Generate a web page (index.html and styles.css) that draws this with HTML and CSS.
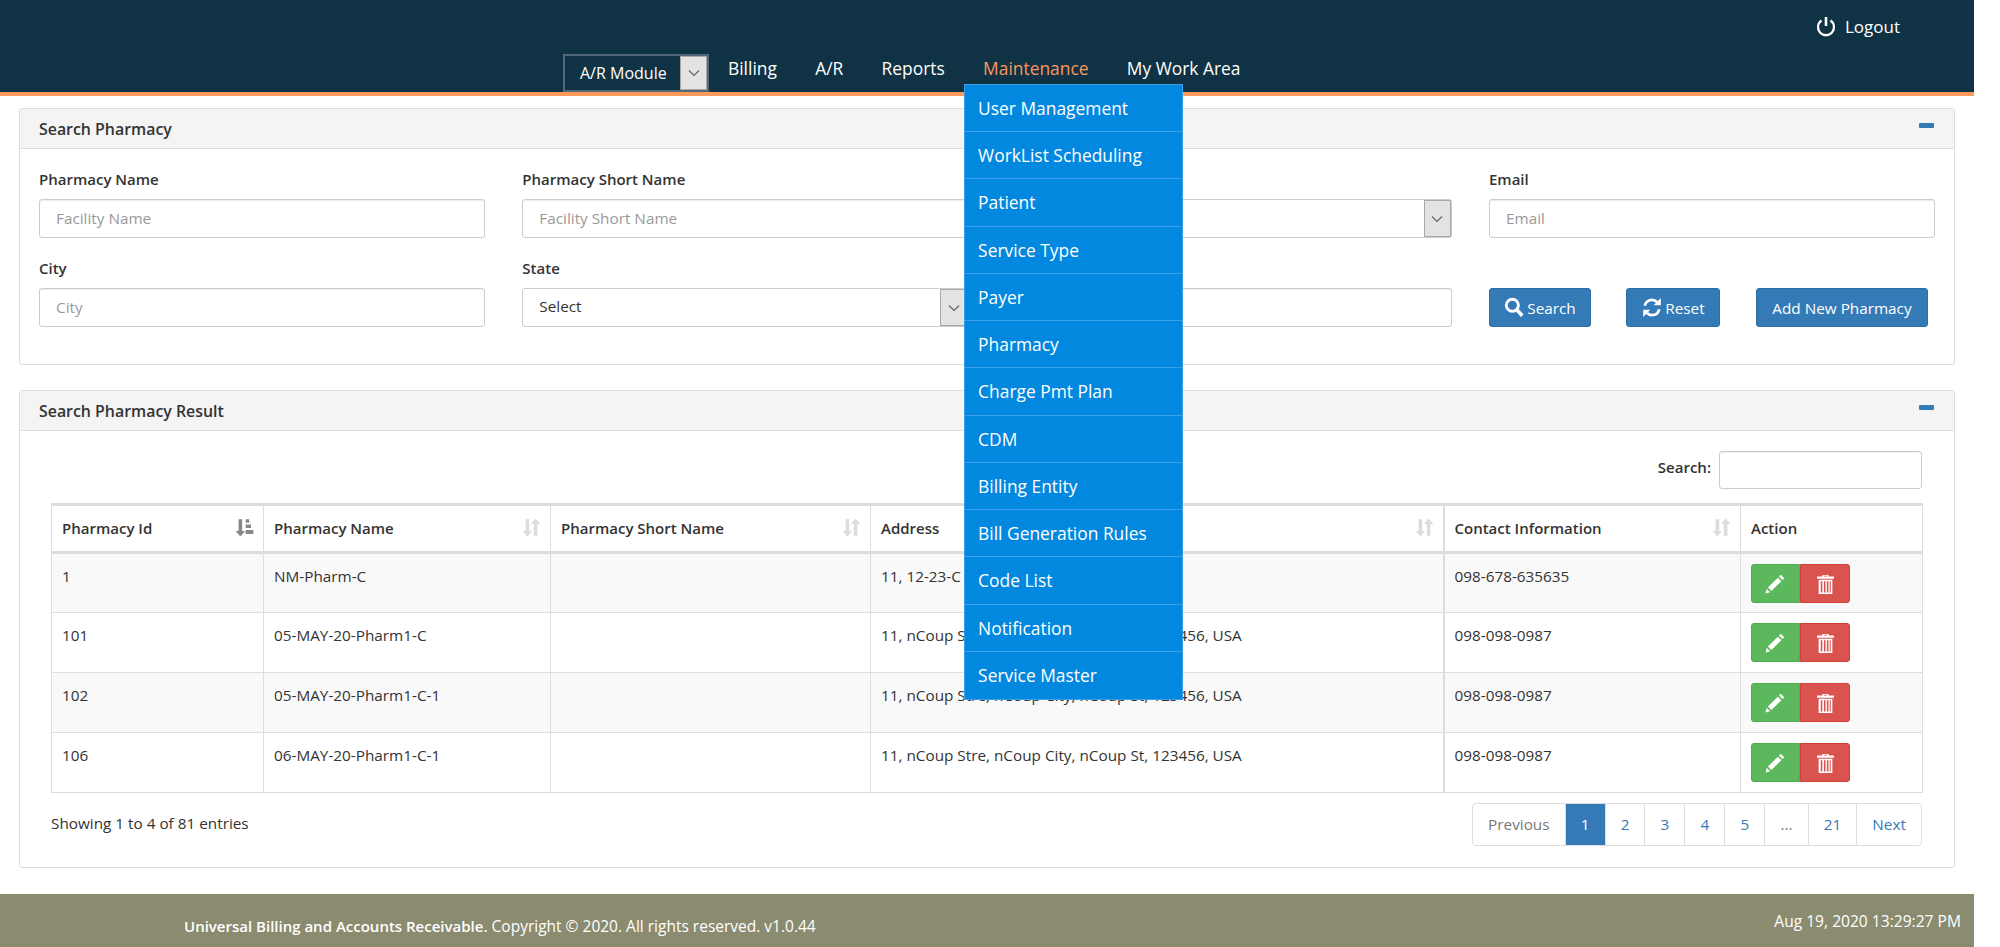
FILE: index.html
```html
<!DOCTYPE html>
<html lang="en">
<head>
    <meta charset="UTF-8">
    <title>Search Pharmacy</title>
    <link rel="stylesheet" href="styles.css">
</head>
<body>
    <svg class="defs" width="0" height="0">
        <symbol id="i-chevron" viewBox="0 0 12 8"><path d="M1 1.5l5 5 5-5" fill="none" stroke="currentColor" stroke-width="1.2"/></symbol>
        <symbol id="i-sort" viewBox="0 0 16 16"><path d="M3 1h3v10h2.500L4.500 15.500.5 11H3zM10 5H7.500l4-4.500 4 4.500H13v10h-3z" fill="currentColor"/></symbol>
        <symbol id="i-sort-active" viewBox="0 0 16 16"><path d="M3 1h3v10h2.500L4.500 15.500.5 11H3zM9 1h3v3H9zM9 5.500h4.500v3H9zM9 10h6.500v3.500H9z" fill="currentColor"/></symbol>
        <symbol id="i-pencil" viewBox="0 0 18 18"><path d="M13.500 1.500l3 3-1.500 1.500-3-3zM11 4l3 3-8.500 8.500-3-3zM1.500 13.500l3 3-4 1z" fill="currentColor"/></symbol>
        <symbol id="i-trash" viewBox="0 0 18 20"><path fill="currentColor" fill-rule="evenodd" d="M6 1.500h6V3h5v2H1V3h5zM7.500 2.200V3h3v-.8zM2.500 6h13v13.500h-13zM4.500 7.500v10.500h1.500V7.500zM7.500 7.500v10.500H9V7.500zM10.300 7.500v10.500h1.500V7.500zM13 7.500v10.500h1V7.500z"/></symbol>
    </svg>

    <div id="page">
        <header class="topbar">
            <div class="topbar-user">
                <a class="logout" href="#">
                    <svg width="20" height="21" viewBox="0 0 20 21"><path d="M5.500 4.500a8 8 0 1 0 9 0" fill="none" stroke="#fff" stroke-width="2.200"/><path d="M10 1v9" stroke="#fff" stroke-width="2.600"/></svg>
                    Logout
                </a>
            </div>
            <nav class="topbar-nav">
                <div class="module-select">
                    <span class="module-name">A/R Module</span>
                    <span class="module-arrow"><svg width="12" height="8"><use href="#i-chevron"/></svg></span>
                </div>
                <ul class="menu">
                    <li><a href="#">Billing</a></li>
                    <li><a href="#">A/R</a></li>
                    <li><a href="#">Reports</a></li>
                    <li class="active">
                        <a href="#">Maintenance</a>
                        <ul class="submenu">
                            <li><a href="#">User Management</a></li>
                            <li><a href="#">WorkList Scheduling</a></li>
                            <li><a href="#">Patient</a></li>
                            <li><a href="#">Service Type</a></li>
                            <li><a href="#">Payer</a></li>
                            <li><a href="#">Pharmacy</a></li>
                            <li><a href="#">Charge Pmt Plan</a></li>
                            <li><a href="#">CDM</a></li>
                            <li><a href="#">Billing Entity</a></li>
                            <li><a href="#">Bill Generation Rules</a></li>
                            <li><a href="#">Code List</a></li>
                            <li><a href="#">Notification</a></li>
                            <li><a href="#">Service Master</a></li>
                        </ul>
                    </li>
                    <li><a href="#">My Work Area</a></li>
                </ul>
            </nav>
        </header>

        <main class="content">
            <section class="panel">
                <div class="panel-heading">
                    <span>Search Pharmacy</span>
                    <span class="collapse-bar"></span>
                </div>
                <div class="panel-body search-form">
                    <div class="field">
                        <label>Pharmacy Name</label>
                        <input type="text" placeholder="Facility Name">
                    </div>
                    <div class="field">
                        <label>Pharmacy Short Name</label>
                        <input type="text" placeholder="Facility Short Name">
                    </div>
                    <div class="field">
                        <label>&nbsp;</label>
                        <div class="select">
                            <span></span>
                            <span class="select-arrow"><svg width="12" height="8"><use href="#i-chevron"/></svg></span>
                        </div>
                    </div>
                    <div class="field">
                        <label>Email</label>
                        <input type="text" placeholder="Email">
                    </div>
                    <div class="field">
                        <label>City</label>
                        <input type="text" placeholder="City">
                    </div>
                    <div class="field">
                        <label>State</label>
                        <div class="select">
                            <span>Select</span>
                            <span class="select-arrow"><svg width="12" height="8"><use href="#i-chevron"/></svg></span>
                        </div>
                    </div>
                    <div class="field">
                        <label>&nbsp;</label>
                        <input type="text">
                    </div>
                    <div class="field">
                        <label>&nbsp;</label>
                        <div class="form-buttons">
                            <button class="btn btn-search">
                                <svg width="20" height="21" viewBox="0 0 18 19"><circle cx="7.500" cy="7.500" r="5.500" fill="none" stroke="#fff" stroke-width="2.600"/><path d="M11.500 11.500l5 5.500" stroke="#fff" stroke-width="3.200"/></svg>
                                Search
                            </button>
                            <button class="btn btn-reset">
                                <svg width="20" height="21" viewBox="0 0 18 19"><path d="M2.500 8a6.500 6.500 0 0 1 11-3.500" fill="none" stroke="#fff" stroke-width="2.400"/><path d="M17 1v6.500h-6.500z" fill="#fff"/><path d="M15.500 11a6.500 6.500 0 0 1-11 3.500" fill="none" stroke="#fff" stroke-width="2.400"/><path d="M1 18v-6.500h6.500z" fill="#fff"/></svg>
                                Reset
                            </button>
                            <button class="btn btn-add">Add New Pharmacy</button>
                        </div>
                    </div>
                </div>
            </section>

            <section class="panel">
                <div class="panel-heading">
                    <span>Search Pharmacy Result</span>
                    <span class="collapse-bar"></span>
                </div>
                <div class="panel-body result-body">
                    <div class="table-search">
                        <label>Search:</label>
                        <input type="text">
                    </div>
                    <table class="result-table">
                        <colgroup>
                            <col class="col-id">
                            <col class="col-name">
                            <col class="col-short">
                            <col class="col-address">
                            <col class="col-contact">
                            <col class="col-action">
                        </colgroup>
                        <thead>
                            <tr>
                                <th><div class="th-inner">Pharmacy Id <svg class="sort sort-on"><use href="#i-sort-active"/></svg></div></th>
                                <th><div class="th-inner">Pharmacy Name <svg class="sort"><use href="#i-sort"/></svg></div></th>
                                <th><div class="th-inner">Pharmacy Short Name <svg class="sort"><use href="#i-sort"/></svg></div></th>
                                <th><div class="th-inner">Address <svg class="sort"><use href="#i-sort"/></svg></div></th>
                                <th class="contact"><div class="th-inner">Contact Information <svg class="sort"><use href="#i-sort"/></svg></div></th>
                                <th>Action</th>
                            </tr>
                        </thead>
                        <tbody>
                            <tr>
                                <td>1</td>
                                <td>NM-Pharm-C</td>
                                <td></td>
                                <td>11, 12-23-C</td>
                                <td class="contact">098-678-635635</td>
                                <td class="actions"><button class="act act-edit"><svg width="21" height="21"><use href="#i-pencil"/></svg></button><button class="act act-del"><svg width="19" height="22"><use href="#i-trash"/></svg></button></td>
                            </tr>
                            <tr>
                                <td>101</td>
                                <td>05-MAY-20-Pharm1-C</td>
                                <td></td>
                                <td>11, nCoup Stre, nCoup City, nCoup St, 123456, USA</td>
                                <td class="contact">098-098-0987</td>
                                <td class="actions"><button class="act act-edit"><svg width="21" height="21"><use href="#i-pencil"/></svg></button><button class="act act-del"><svg width="19" height="22"><use href="#i-trash"/></svg></button></td>
                            </tr>
                            <tr>
                                <td>102</td>
                                <td>05-MAY-20-Pharm1-C-1</td>
                                <td></td>
                                <td>11, nCoup Stre, nCoup City, nCoup St, 123456, USA</td>
                                <td class="contact">098-098-0987</td>
                                <td class="actions"><button class="act act-edit"><svg width="21" height="21"><use href="#i-pencil"/></svg></button><button class="act act-del"><svg width="19" height="22"><use href="#i-trash"/></svg></button></td>
                            </tr>
                            <tr>
                                <td>106</td>
                                <td>06-MAY-20-Pharm1-C-1</td>
                                <td></td>
                                <td>11, nCoup Stre, nCoup City, nCoup St, 123456, USA</td>
                                <td class="contact">098-098-0987</td>
                                <td class="actions"><button class="act act-edit"><svg width="21" height="21"><use href="#i-pencil"/></svg></button><button class="act act-del"><svg width="19" height="22"><use href="#i-trash"/></svg></button></td>
                            </tr>
                        </tbody>
                    </table>
                    <div class="table-footer">
                        <div class="table-info">Showing 1 to 4 of 81 entries</div>
                        <ul class="pagination">
                            <li class="disabled">Previous</li>
                            <li class="current">1</li>
                            <li>2</li>
                            <li>3</li>
                            <li>4</li>
                            <li>5</li>
                            <li class="disabled">...</li>
                            <li>21</li>
                            <li>Next</li>
                        </ul>
                    </div>
                </div>
            </section>
        </main>

        <footer class="footer">
            <div class="footer-copy"><b>Universal Billing and Accounts Receivable.</b> Copyright © 2020. All rights reserved. v1.0.44</div>
            <div class="footer-date">Aug 19, 2020 13:29:27 PM</div>
        </footer>
    </div>
</body>
</html>
```

FILE: styles.css
```css
*{
    margin: 0;
    padding: 0;
    box-sizing: border-box;
}
html,body{
    background: #fff;
}
body{
    font-family: "Open Sans", "Liberation Sans", sans-serif;
    font-size: 15.300px;
    color: #333;
    overflow: hidden;
}
ul{
    list-style: none;
}
a{
    color: inherit;
    text-decoration: none;
}
.defs{
    position: absolute;
}
#page{
    width: 1974px;
    height: 947px;
    display: flex;
    flex-direction: column;
}

/* header */
.topbar{
    height: 96px;
    background: #0f3244;
    border-bottom: 4px solid #ff9a5c;
    color: #fff;
    font-size: 17.400px;
}
.topbar-user{
    height: 54px;
    display: flex;
    justify-content: flex-end;
    align-items: center;
    padding-right: 74px;
}
.logout{
    display: flex;
    align-items: center;
    gap: 9px;
    font-size: 17px;
    padding-bottom: 2px;
}
.topbar-nav{
    display: flex;
    height: 38px;
    padding-left: 563px;
}
.module-select{
    width: 146px;
    display: flex;
    border: 2px solid #54687a;
    font-size: 16px;
}
.module-name{
    flex: 1;
    padding-left: 15px;
    line-height: 35px;
}
.module-arrow,.select-arrow{
    width: 27px;
    display: flex;
    align-items: center;
    justify-content: center;
    background: #e3e3e3;
    border: 1px solid #a9a9a9;
    color: #666;
}
.menu{
    display: flex;
    gap: 38.300px;
    margin-left: 19px;
}
.menu > li{
    position: relative;
    line-height: 28px;
}
.menu > li.active > a{
    color: #f9985d;
}
.submenu{
    position: absolute;
    left: -19px;
    top: 30px;
    width: 219px;
    background: #0288de;
    border: 1px solid #3d9eea;
    border-top: 1px solid #3d9eea;
    z-index: 10;
}
.submenu li{
    height: 47.240px;
    line-height: 46px;
    padding-left: 13px;
    border-bottom: 1px solid #3d9eea;
    white-space: nowrap;
}
.submenu li:last-child{
    border-bottom: 0;
}

/* panels */
.content{
    flex: 1;
    min-height: 0;
    padding: 12px 19px 0;
}
.panel{
    border: 1px solid #ddd;
    border-radius: 3px;
    margin-bottom: 25px;
}
.panel-heading{
    height: 40px;
    display: flex;
    justify-content: space-between;
    align-items: center;
    padding: 0 20px 0 19px;
    background: #f4f4f4;
    border-bottom: 1px solid #ddd;
    font-size: 15.900px;
    font-weight: 600;
}
.collapse-bar{
    width: 15px;
    height: 5px;
    margin-bottom: 6px;
    background: #337ab7;
    border-radius: 1px;
}
.search-form{
    display: grid;
    grid-template-columns: repeat(4, 446px);
    column-gap: 37.330px;
    row-gap: 20px;
    padding: 20px 19px 37px;
}
.field label{
    display: block;
    height: 22px;
    line-height: 20px;
    margin-bottom: 8px;
    font-size: 15px;
    font-weight: 600;
}
input{
    display: block;
    width: 100%;
    height: 39px;
    padding: 0 16px 2px;
    border: 1px solid #ccc;
    border-radius: 3px;
    box-shadow: inset 0 1px 1px rgba(0,0,0,.075);
    font-family: inherit;
    font-size: 15.300px;
    color: #333;
}
input::placeholder{
    color: #999;
}
.select{
    height: 39px;
    display: flex;
    justify-content: space-between;
    align-items: stretch;
    padding-left: 16px;
    border: 1px solid #ccc;
    border-radius: 3px;
    line-height: 35px;
}
.form-buttons{
    display: flex;
    gap: 35.500px;
}
.btn{
    height: 39px;
    display: flex;
    align-items: center;
    justify-content: center;
    gap: 3px;
    background: #337ab7;
    border: 1px solid #2e6da4;
    border-radius: 3px;
    color: #fff;
    font-family: inherit;
    font-size: 15.300px;
}
.btn-search{
    width: 102px;
}
.btn-reset{
    width: 94px;
}
.btn-add{
    width: 172px;
}

/* result table */
.result-body{
    padding: 20px 32px 21px 31px;
}
.table-search{
    display: flex;
    justify-content: flex-end;
    align-items: center;
    gap: 8px;
    margin-bottom: 14px;
}
.table-search label{
    font-size: 15px;
    font-weight: 600;
    padding-bottom: 6px;
}
.table-search input{
    width: 203px;
    height: 38px;
}
.result-table{
    width: 1871px;
    table-layout: fixed;
    border-collapse: collapse;
}
.col-id{ width: 212px; }
.col-name{ width: 287px; }
.col-short{ width: 320px; }
.col-address{ width: 573px; }
.col-contact{ width: 297px; }
.col-action{ width: 182px; }
.result-table th,.result-table td{
    border: 1px solid #ddd;
    text-align: left;
    padding-left: 10px;
}
.result-table th{
    height: 48px;
    border-top: 3px solid #ddd;
    border-bottom: 3px solid #ddd;
    font-size: 15px;
    font-weight: 600;
    padding-right: 9px;
    padding-bottom: 2px;
}
.result-table td{
    height: 60px;
    vertical-align: top;
    padding-top: 12px;
}
.result-table tbody tr:nth-child(odd){
    background: #f9f9f9;
}
.result-table .contact{
    border-left: 2px solid #ddd;
}
.th-inner{
    display: flex;
    justify-content: space-between;
    align-items: center;
}
.sort{
    width: 19px;
    height: 19px;
    color: #dcdcdc;
}
.sort-on{
    color: #888;
}
.result-table .actions{
    padding-top: 10px;
}
.actions{
    white-space: nowrap;
}
.act{
    display: inline-flex;
    align-items: center;
    justify-content: center;
    height: 39px;
    color: #fff;
    vertical-align: top;
}
.act-edit{
    width: 49px;
    background: #5cb85c;
    border: 1px solid #4cae4c;
    border-radius: 3px 0 0 3px;
}
.act-del{
    width: 50px;
    background: #d9534f;
    border: 1px solid #d43f3a;
    border-radius: 0 3px 3px 0;
}
.table-footer{
    display: flex;
    justify-content: space-between;
    align-items: center;
    margin-top: 10px;
}
.table-info{
    padding-bottom: 3px;
}
.pagination{
    display: flex;
    border: 1px solid #ddd;
    border-radius: 4px;
    height: 43px;
}
.pagination li{
    padding: 0 15.100px;
    line-height: 41px;
    color: #337ab7;
    border-left: 1px solid #ddd;
}
.pagination li:first-child{
    border-left: 0;
}
.pagination li.disabled{
    color: #777;
}
.pagination li.current{
    background: #337ab7;
    color: #fff;
}

/* footer */
.footer{
    height: 53px;
    display: flex;
    justify-content: space-between;
    padding: 0 13px 0 184px;
    background: #8b8b70;
    color: #fff;
}
.footer-copy{
    padding-top: 21px;
    font-size: 15.500px;
}
.footer-copy b{
    font-size: 15px;
    font-weight: 600;
}
.footer-date{
    padding-top: 16px;
    font-size: 15.600px;
}
```
